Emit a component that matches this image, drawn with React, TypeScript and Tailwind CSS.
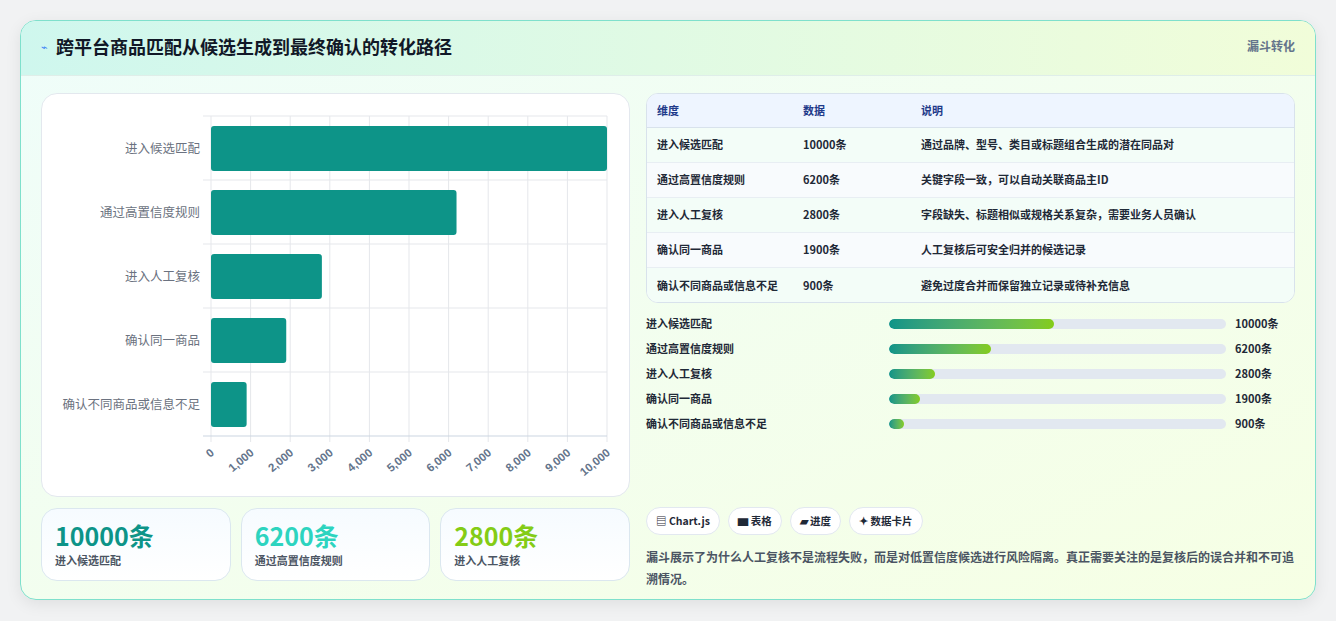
const rows = [
  { name: "进入候选匹配", value: 10000, desc: "通过品牌、型号、类目或标题组合生成的潜在同品对" },
  { name: "通过高置信度规则", value: 6200, desc: "关键字段一致，可以自动关联商品主ID" },
  { name: "进入人工复核", value: 2800, desc: "字段缺失、标题相似或规格关系复杂，需要业务人员确认" },
  { name: "确认同一商品", value: 1900, desc: "人工复核后可安全归并的候选记录" },
  { name: "确认不同商品或信息不足", value: 900, desc: "避免过度合并而保留独立记录或待补充信息" },
];

const font = { fontFamily: '"Noto Sans CJK SC", "Noto Sans", sans-serif' };

function Chart() {
  const x0 = 169;
  const w = 396;
  const y0 = 22;
  const rh = 64;
  return (
    <svg width="589" height="403" className="block">
      {Array.from({ length: 11 }).map((_, i) => (
        <line key={i} x1={x0 + (w * i) / 10} x2={x0 + (w * i) / 10} y1={y0} y2={y0 + rh * 5 + 6} stroke="#e5e7eb" />
      ))}
      {Array.from({ length: 6 }).map((_, i) => (
        <line key={i} x1={x0 - 8} x2={x0 + w} y1={y0 + rh * i} y2={y0 + rh * i} stroke={i === 5 ? "#cbd5e1" : "#e5e7eb"} />
      ))}
      {rows.map((r, i) => (
        <g key={r.name}>
          <rect x={x0} y={y0 + rh * i + 10} width={(w * r.value) / 10000} height={45} rx={3} fill="#0d9488" />
          <text x={x0 - 11} y={y0 + rh * i + 37} textAnchor="end" fontSize="12.5" fill="#6b7280">{r.name}</text>
        </g>
      ))}
      {Array.from({ length: 11 }).map((_, i) => {
        const x = x0 + (w * i) / 10 + 4;
        const y = y0 + rh * 5 + 18;
        return (
          <text key={i} x={x} y={y} textAnchor="end" fontSize="11.5" fontWeight="700" fill="#64748b" transform={`rotate(-40 ${x} ${y})`} style={{ fontFamily: '"Liberation Sans", sans-serif' }}>
            {(i * 1000).toLocaleString("en-US")}
          </text>
        );
      })}
    </svg>
  );
}

export default function App() {
  return (
    <div className="min-h-screen bg-[#f1f2f3] pt-5 px-5 pb-5" style={font}>
      <div className="w-[1296px] h-[580px] rounded-2xl border border-[#7fe0cc] overflow-hidden bg-gradient-to-br from-[#effdfa] to-[#f6ffe4] shadow-[0_4px_16px_rgba(0,0,0,0.08)] flex flex-col">
        {/* Header */}
        <div className="h-[55px] shrink-0 flex items-start justify-between px-5 pt-3 bg-gradient-to-r from-[#cff7ee] to-[#f1fdd9] border-b border-[#dfeee9]">
          <div className="flex items-center gap-2">
            <span className="text-[11px] text-[#3b82f6]">⌁</span>
            <h1 className="text-[18px] font-bold text-[#111827]">跨平台商品匹配从候选生成到最终确认的转化路径</h1>
          </div>
          <span className="text-[12px] font-bold text-[#64748b] pt-1">漏斗转化</span>
        </div>
        {/* Body */}
        <div className="flex gap-4 px-5 pt-[17px]">
          <div className="w-[589px] shrink-0 flex flex-col gap-[11px]">
            <div className="h-[404px] rounded-2xl border border-[#e3e8ee] bg-white">
              <Chart />
            </div>
            <div className="grid grid-cols-3 gap-[10px]">
              {[
                { v: "10000条", l: "进入候选匹配", c: "text-[#0d9488]" },
                { v: "6200条", l: "通过高置信度规则", c: "text-[#2dd4bf]" },
                { v: "2800条", l: "进入人工复核", c: "text-[#84cc16]" },
              ].map((s) => (
                <div key={s.l} className="h-[73px] rounded-2xl border border-[#dbe7ef] bg-gradient-to-b from-[#f6fbff] to-white px-[13px] pt-[9px]">
                  <div className={`text-[25px] font-bold leading-[34px] ${s.c}`}>{s.v}</div>
                  <div className="text-[11px] font-bold text-[#4b5563] leading-4">{s.l}</div>
                </div>
              ))}
            </div>
          </div>
          <div className="flex-1 flex flex-col">
            <div className="rounded-xl border border-[#d8e2ec] overflow-hidden bg-white">
              <table className="w-full text-[11px] font-bold text-[#1f2937]">
                <thead>
                  <tr className="bg-[#eef5ff] text-[#1e3a8a] h-[33px] border-b border-[#d8e2ec]">
                    <th className="text-left font-bold pl-[10px] w-[156px]">维度</th>
                    <th className="text-left font-bold w-[118px]">数据</th>
                    <th className="text-left font-bold">说明</th>
                  </tr>
                </thead>
                <tbody>
                  {rows.map((r, i) => (
                    <tr key={r.name} className={`h-[35px] ${i < 4 ? "border-b border-[#e8eef3]" : ""} ${i % 2 === 0 ? "bg-[#f3fdf8]" : "bg-[#f8fbfd]"}`}>
                      <td className="pl-[10px]">{r.name}</td>
                      <td className="font-semibold">{r.value}条</td>
                      <td className="font-semibold">{r.desc}</td>
                    </tr>
                  ))}
                </tbody>
              </table>
            </div>
            <div className="flex flex-col gap-[8px] mt-[12px]">
              {rows.map((r) => (
                <div key={r.name} className="flex items-center h-[17px] text-[11px] font-bold text-[#1f2937]">
                  <span className="w-[243px]">{r.name}</span>
                  <div className="w-[337px] h-[10px] rounded-full bg-[#e2e8f0] overflow-hidden">
                    <div className="h-full rounded-full bg-gradient-to-r from-[#0d9488] to-[#84cc16]" style={{ width: `${(r.value / 10000) * 49}%`, minWidth: 15 }} />
                  </div>
                  <span className="ml-[9px]">{r.value}条</span>
                </div>
              ))}
            </div>
            <div className="flex gap-[8px] mt-[75px]">
              {["▤ Chart.js", "▆ 表格", "▰ 进度", "✦ 数据卡片"].map((t) => (
                <span key={t} className="h-[28px] px-[9px] flex items-center rounded-full border border-[#e2e8f0] bg-white text-[10.5px] font-bold text-[#1f2937]">{t}</span>
              ))}
            </div>
            <p className="mt-[11px] text-[12px] font-bold leading-[22px] text-[#4b5563]">
              漏斗展示了为什么人工复核不是流程失败，而是对低置信度候选进行风险隔离。真正需要关注的是复核后的误合并和不可追溯情况。
            </p>
          </div>
        </div>
      </div>
    </div>
  );
}
